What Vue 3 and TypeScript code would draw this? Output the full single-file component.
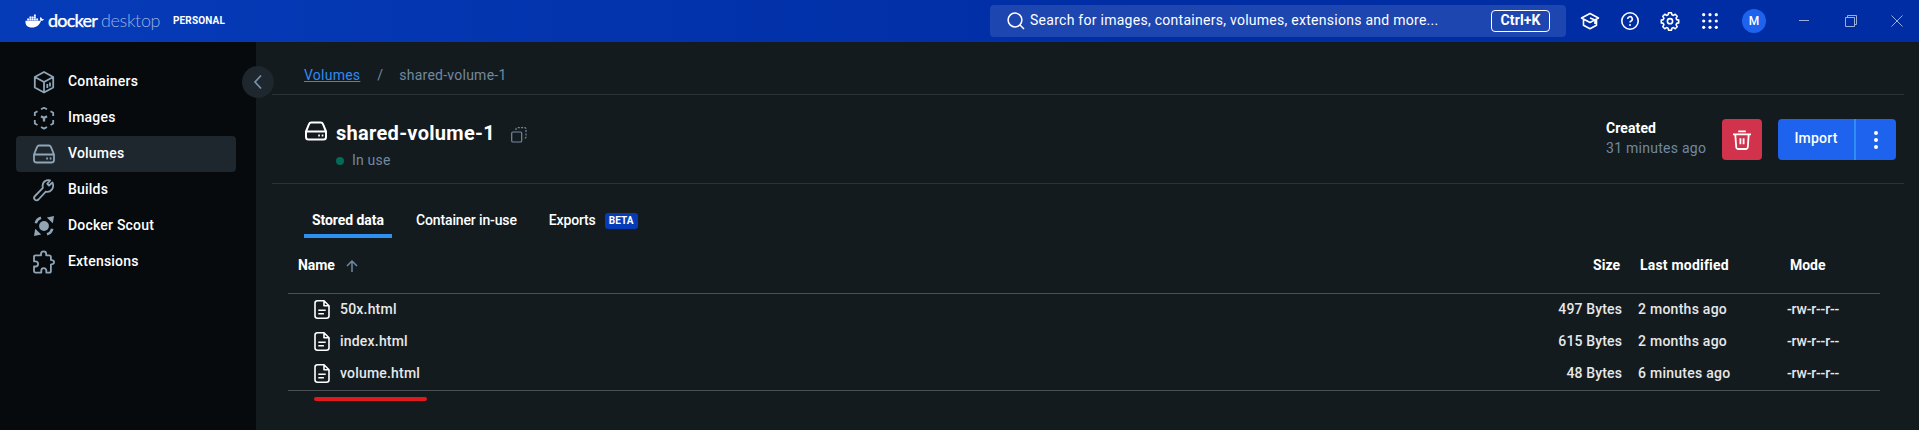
<script setup lang="ts">
type NavItem = { label: string; icon: string; active?: boolean }

const nav: NavItem[] = [
  { label: 'Containers', icon: 'container' },
  { label: 'Images', icon: 'image' },
  { label: 'Volumes', icon: 'volume', active: true },
  { label: 'Builds', icon: 'wrench' },
  { label: 'Docker Scout', icon: 'scout' },
  { label: 'Extensions', icon: 'puzzle' },
]

const files = [
  { name: '50x.html', size: '497 Bytes', modified: '2 months ago', mode: '-rw-r--r--' },
  { name: 'index.html', size: '615 Bytes', modified: '2 months ago', mode: '-rw-r--r--' },
  { name: 'volume.html', size: '48 Bytes', modified: '6 minutes ago', mode: '-rw-r--r--' },
]
</script>

<template>
  <div class="window">
    <header class="topbar">
      <div class="brand">
        <svg class="whale" viewBox="0 0 20 16">
          <path d="M.4 7.3h14.3c.8 0 1.4-.2 1.7-.5-.7-1-.7-2.5.1-3.6 1 .6 1.5 1.3 1.5 2.1.7-.1 1.5 0 2 .4-.5 1.2-1.6 1.6-3 1.6-1.6 4.5-4.8 7.2-9.5 7.2C2.3 14.5-.1 11.7.4 7.3z" />
          <path d="M2.200 4.800h2v2h-2zM4.600 4.800h2v2h-2zM7 4.800h2v2H7zM9.400 4.800h2v2h-2zM11.800 4.800h2v2h-2zM4.600 2.600h2v1.900h-2zM7 2.600h2v1.900H7zM9.400 2.600h2v1.900h-2zM9.400.4h2v1.900h-2z" />
        </svg>
        <span class="docker">docker</span><span class="desktop">desktop</span>
        <span class="plan">PERSONAL</span>
      </div>
      <div class="search">
        <svg class="search-icon" viewBox="0 0 18 18"><circle cx="8" cy="8" r="6.900" /><path d="M13 13l4 4" /></svg>
        <span class="placeholder">Search for images, containers, volumes, extensions and more...</span>
        <kbd>Ctrl+K</kbd>
      </div>
      <div class="tools">
        <svg viewBox="0 0 20 20"><path d="M1.500 7L10 2.500 18.500 7 10 11.500zM3.500 8.500v5.700L10 17.800l6.500-3.600V8.500M10 7l5 2v4" /></svg>
        <svg viewBox="0 0 20 20"><circle cx="10" cy="10" r="8.200" /><path d="M7.700 8a2.300 2.300 0 1 1 3.400 2c-.8.400-1.100.8-1.100 1.600" /><circle class="solid" cx="10" cy="14" r="1" /></svg>
        <svg viewBox="0 0 20 20"><path d="M8.600 1.800h2.800l.5 2 1.500.6 1.800-1.100 2 2-1.100 1.800.6 1.500 2 .5v2.800l-2 .5-.6 1.500 1.100 1.800-2 2-1.800-1.100-1.500.6-.5 2H8.600l-.5-2-1.500-.6-1.800 1.100-2-2 1.100-1.800-.6-1.500-2-.5V9.100l2-.5.6-1.500-1.100-1.800 2-2 1.800 1.100 1.500-.6z" /><circle cx="10" cy="10.200" r="2.600" /></svg>
        <svg viewBox="0 0 20 20"><g class="solid"><template v-for="y in 3" :key="y"><circle v-for="x in 3" :key="x" :cx="x * 6.300 - 2.600" :cy="y * 6.300 - 2.600" r="1.600" /></template></g></svg>
        <span class="avatar">M</span>
      </div>
      <div class="controls">
        <svg viewBox="0 0 12 12"><path d="M1 5.500h10" /></svg>
        <svg viewBox="0 0 12 12"><path d="M.5 2.500h9v9h-9zM2.500 2.500v-2h9v9h-2" /></svg>
        <svg viewBox="0 0 12 12"><path d="M.5.500l11 11M11.500.500l-11 11" /></svg>
      </div>
    </header>

    <div class="body">
      <aside class="sidebar">
        <nav>
          <a v-for="item in nav" :key="item.label" class="nav-item" :class="{ active: item.active }">
            <svg class="nav-icon" viewBox="0 0 24 24">
              <g v-if="item.icon === 'container'"><path d="M12 2l9.200 5v10.500L12 22.500l-9.200-5V7zM2.800 7l9.200 5 9.200-5M12 12v10.500" /><path d="M15.300 14v4M18 12.500v4" /></g>
              <g v-else-if="item.icon === 'image'"><path d="M9 3.300l3-1.500 3 1.500M18.500 5.200L21.200 6.800V10M21.200 14v3.500l-2.700 1.600M15 21l-3 1.600L9 21M5.500 19.100l-2.700-1.600V14M2.800 10V6.800l2.700-1.600" /><path d="M9 10.300l3 1.700 3-1.700M12 12v3.500" stroke-width="2.300" /></g>
              <g v-else-if="item.icon === 'volume'"><path d="M2 12.500L5 5.200Q5.600 3.500 7.300 3.500h9.400q1.700 0 2.300 1.700l3 7.300v5.500q0 2.500-2.500 2.500h-15Q2 20.500 2 18zM2.300 12.500h19.400" /><path d="M14.200 16.500h1.700M17.700 16.500h1.700" /></g>
              <g v-else-if="item.icon === 'wrench'"><path d="M20.500 4.500l-3.500 3-1.700-1.700 2.800-3.400c-3.200-1.200-7.500 1.100-7.500 5.500 0 .7.100 1.400.3 2L3 18c-2.500 2.500 1 6 3.500 3.500l7.300-7.800c4.700 1.200 9-3.700 6.700-9.200z" /></g>
              <g v-else-if="item.icon === 'scout'" class="solid"><circle cx="12" cy="12" r="4.900" /><path d="M22 2l-1.200 7.200-6-5.800zM2 22l1.200-7.200 6 5.800z" /><path class="arc" d="M3.800 9.300Q4.800 5 9 3.800M20.200 14.700Q19.200 19 15 20.200" /></g>
              <g v-else><path d="M9 5.300V4a2.600 2.600 0 0 1 5.200 0v1.300h3q1.700 0 1.700 1.700v2.900l2.200.6q2 1.600 0 3.400l-2.200.6v6.400q0 1.700-1.700 1.700h-2.900v-2a2.500 2.500 0 0 0-5 0v2H3.700Q2 22.600 2 20.900v-4.400h1.500a2.600 2.600 0 0 0 0-5.200H2V7q0-1.700 1.700-1.700z" /></g>
            </svg>
            <span>{{ item.label }}</span>
          </a>
        </nav>
        <button class="collapse"><svg viewBox="0 0 10 16"><path d="M8 1.500L2 8l6 6.500" /></svg></button>
      </aside>

      <main>
        <div class="crumbs"><a>Volumes</a><span class="slash">/</span><span>shared-volume-1</span></div>
        <section class="heading">
          <svg class="title-icon" viewBox="0 0 24 24"><path d="M2 12.500L5 5.200Q5.600 3.500 7.300 3.500h9.400q1.700 0 2.300 1.700l3 7.300v5.500q0 2.500-2.500 2.500h-15Q2 20.500 2 18zM2.300 12.500h19.400" /><path d="M14.200 16.500h1.700M17.700 16.500h1.700" /></svg>
          <div class="title">
            <div class="title-line">
              <h1>shared-volume-1</h1>
              <svg class="copy" viewBox="0 0 16 16"><rect x=".7" y="5" width="10" height="10" rx="1.300" /><path stroke-dasharray="2 1.300" d="M5 3V2q0-1.300 1.300-1.300h7.500Q15 .7 15 2v8q0 1.200-1.300 1.200h-.7" /></svg>
            </div>
            <div class="status"><i></i>In use</div>
          </div>
          <div class="created"><b>Created</b><span>31 minutes ago</span></div>
          <button class="delete"><svg viewBox="0 0 20 20"><path d="M6.200 1.300h7.600M1 4.300h18M3.300 4.500l.9 12.500q.2 2 2.100 2h7.400q1.900 0 2.100-2l.9-12.500M8.400 8.300v6M11.600 8.300v6" /></svg></button>
          <div class="import"><button class="import-main">Import</button><button class="import-more"><i></i><i></i><i></i></button></div>
        </section>

        <div class="tabs">
          <div class="tab selected">Stored data</div>
          <div class="tab">Container in-use</div>
          <div class="tab">Exports<span class="beta">BETA</span></div>
        </div>

        <div class="table">
          <div class="row head">
            <div class="name">Name<svg class="sort" viewBox="0 0 12 12"><path d="M6 12V1.500M1 6l5-5 5 5" /></svg></div>
            <div class="size">Size</div><div class="modified">Last modified</div><div class="mode">Mode</div>
          </div>
          <div class="files">
            <div v-for="file in files" :key="file.name" class="row">
              <div class="name"><svg class="file" viewBox="0 0 16 19"><path d="M3.500.8H10l5 5v9.900q0 2.500-2.500 2.500h-9Q1 18.200 1 15.700V3.300Q1 .8 3.500.8zM10 .8v5h5M4.300 10.300h7.400M4.300 13.800h5.600" /></svg>{{ file.name }}</div>
              <div class="size">{{ file.size }}</div><div class="modified">{{ file.modified }}</div><div class="mode">{{ file.mode }}</div>
            </div>
          </div>
        </div>
        <div class="marker"></div>
      </main>
    </div>
  </div>
</template>

<style>
body { margin: 0; background: #141b1f; }
</style>

<style scoped>
* { box-sizing: border-box; }
.window { height: 430px; overflow: hidden; background: #141b1f; color: #fff; font: 500 14px/20px Roboto, sans-serif; letter-spacing: .2px; display: flex; flex-direction: column; }
svg { fill: none; stroke: currentColor; stroke-width: 1.8; stroke-linejoin: round; flex: none; }
button { border: 0; padding: 0; margin: 0; color: inherit; font: inherit; letter-spacing: inherit; }
.solid { fill: currentColor; stroke: none; }
.topbar { height: 42px; flex: none; display: flex; align-items: center; background: linear-gradient(90deg, #063bb8, #002da4 60%); }
.brand { display: flex; align-items: center; width: 990px; padding-left: 25px; }
.whale { width: 19px; height: 15px; fill: currentColor; stroke: none; }
.docker, .desktop { font: 500 18px/24px Lato, sans-serif; margin-top: -3px; }
.docker { margin-left: 4px; width: 53px; letter-spacing: -.8px; -webkit-text-stroke: .25px #fff; }
.desktop { font-weight: 300; color: #98afe3; letter-spacing: -.35px; width: 72px; }
.plan { font-size: 10px; font-weight: 700; line-height: 20px; letter-spacing: .15px; }
.search { width: 576px; height: 32px; border-radius: 4px; background: #1d46b1; display: flex; align-items: center; padding: 0 16px 0 17px; }
.search-icon { width: 18px; height: 18px; stroke-width: 1.5; }
.placeholder { flex: 1; margin: -2px 0 0 5px; font-weight: 400; letter-spacing: .27px; }
kbd { width: 59px; height: 22px; border: 1px solid #fff; border-radius: 4px; text-align: center; font: 700 14px/19px Roboto, sans-serif; letter-spacing: .1px; }
.tools { display: flex; align-items: center; gap: 20px; margin-left: 14px; }
.tools svg { width: 20px; height: 20px; stroke-width: 1.6; }
.avatar { width: 24px; height: 24px; border-radius: 50%; background: #1d63ed; text-align: center; font: 500 12px/24px Roboto, sans-serif; margin-left: 2px; letter-spacing: 0; }
.controls { display: flex; gap: 35px; margin-left: 32px; color: #9caedb; }
.controls svg { width: 12px; height: 12px; stroke-width: 1; }
.controls svg:last-child { margin-left: -1px; }
.body { flex: 1; display: flex; }
.sidebar { width: 256px; background: #060a0d; padding: 22px 16px 0; position: relative; }
.nav-item { height: 36px; display: flex; align-items: center; padding-left: 16px; border-radius: 4px; }
.nav-item span { margin: -2px 0 0 12px; }
.nav-item.active { background: #1e272e; width: 220px; }
.nav-icon { width: 24px; height: 24px; color: #90a6b7; }
.arc { fill: none; stroke: currentColor; stroke-width: 2.6; }
.collapse { position: absolute; left: 242px; top: 24px; width: 32px; height: 32px; border-radius: 50%; background: #1e272e; color: #7992a8; display: grid; place-items: center; }
.collapse svg { width: 10px; height: 16px; }
main { flex: 1; min-width: 0; padding: 0 15px 0 16px; }
.crumbs { height: 53px; padding: 23px 0 0 32px; border-bottom: 1px solid #2c3135; color: #7189a0; font-weight: 400; display: flex; letter-spacing: .24px; }
.crumbs a { color: #2e8bf5; text-decoration: underline; }
.slash { width: 5px; margin: 0 17px; }
.heading { height: 89px; border-bottom: 1px solid #2c3135; display: flex; padding: 0 8px 0 32px; }
.title-icon { width: 24px; height: 24px; margin-top: 24px; stroke-width: 2; }
.title { flex: 1; margin-left: 8px; padding-top: 22px; }
.title-line { display: flex; }
h1 { width: 158px; margin: 0; font: 700 20px/32px Roboto, sans-serif; letter-spacing: .3px; white-space: nowrap; }
.copy { width: 16px; height: 16px; color: #7189a0; margin: 10px 0 0 17px; stroke-width: 1.2; }
.status { display: flex; align-items: center; color: #7189a0; font-weight: 400; height: 20px; margin-top: 1px; }
.status i { width: 8px; height: 8px; border-radius: 50%; background: #036a58; margin: 2px 8px 0 0; }
.created { display: flex; flex-direction: column; padding-top: 23px; width: 116px; color: #7189a0; font-weight: 400; letter-spacing: .26px; }
.created b { color: #fff; font-weight: 700; letter-spacing: .1px; }
.delete { width: 40px; height: 41px; border-radius: 4px; background: #d1334c; display: grid; place-items: center; margin: 24px 16px 0 0; }
.delete svg { width: 20px; height: 20px; }
.import { display: flex; width: 118px; height: 41px; margin-top: 24px; border-radius: 4px; overflow: hidden; }
.import button { background: #1d63ed; }
.import .import-main { width: 78px; border-right: 2px solid #2e8cf2; padding-bottom: 3px; }
.import-more { flex: 1; display: flex; flex-direction: column; align-items: center; justify-content: center; gap: 3px; }
.import-more i { width: 4px; height: 4px; border-radius: 50%; background: #fff; }
.tabs { display: flex; height: 54px; padding-left: 32px; }
.tab { padding: 26px 8px 0; margin-right: 16px; white-space: nowrap; letter-spacing: -.14px; }
.tab.selected { width: 88px; border-bottom: 4px solid #2e90f0; font-weight: 700; letter-spacing: -.07px; }
.beta { display: inline-block; background: #063bb7; border-radius: 3px; width: 33px; height: 16px; font: 700 10px/16px Roboto, sans-serif; text-align: center; margin-left: 9px; vertical-align: 1px; letter-spacing: .1px; }
.table { width: 1592px; margin-left: 16px; }
.row { display: flex; height: 32px; line-height: 30px; color: #e6e8e9; }
.name { flex: 1; padding-left: 26px; display: flex; }
.file { width: 16px; height: 19px; margin: 6px 10px 0 0; color: #fff; stroke-width: 1.6; }
.size { width: 100px; text-align: right; }
.files .size { letter-spacing: .14px; }
.modified { width: 165px; padding-left: 16px; letter-spacing: .26px; }
.mode { width: 93px; letter-spacing: -.18px; }
.head { height: 55px; padding-top: 12px; color: #fff; font-weight: 700; }
.head .name { padding-left: 10px; letter-spacing: -.05px; }
.head .size { padding-right: 2px; letter-spacing: 0; }
.head .modified { padding-left: 18px; letter-spacing: .2px; }
.head .mode { padding-left: 3px; letter-spacing: -.05px; }
.sort { width: 12px; height: 12px; margin: 10px 0 0 11px; color: #7189a0; stroke-width: 1.5; }
.files { height: 98px; border-top: 1px solid #4c5052; border-bottom: 1px solid #4c5052; }
.marker { width: 113px; height: 4px; background: #e0191c; border-radius: 2px; margin: 6px 0 0 42px; }
</style>
